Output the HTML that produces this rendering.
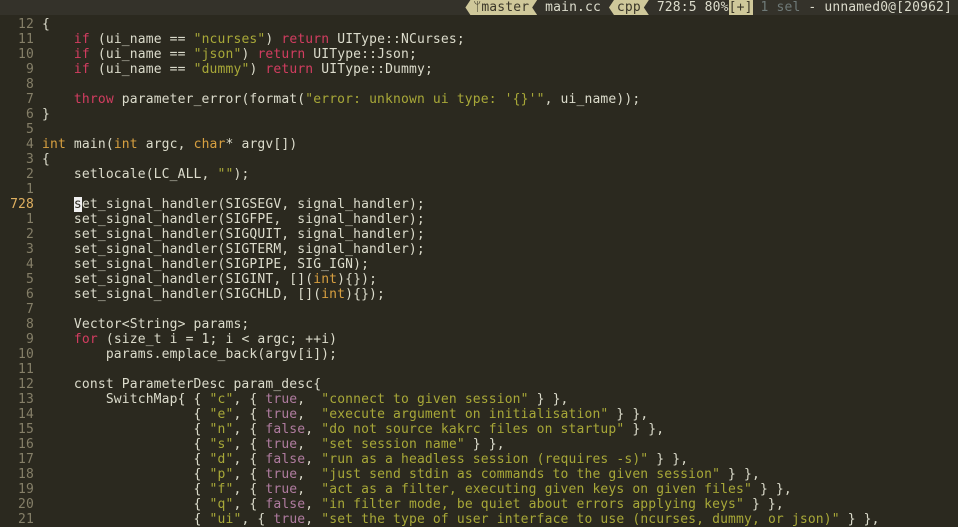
<!DOCTYPE html>
<html><head><meta charset="utf-8"><style>
html,body{margin:0;padding:0;background:#2b291f;width:958px;height:527px;overflow:hidden}
body{font-family:"DejaVu Sans Mono","Liberation Mono",monospace;font-size:13px;color:#dcdccc;letter-spacing:0.15px}
.row{position:absolute;left:0;height:15px;line-height:15px;white-space:pre;width:958px;margin-top:2px}
.ln{position:absolute;right:924px;color:#857f68;text-align:right}
.cur{color:#e0b060}
.c{position:absolute;left:42px}
.k{color:#d23d60}.s{color:#a8a838}.t{color:#d8a040}.b{color:#b07ca0}
#st{position:absolute;top:0;left:0;width:958px;height:15px;background:#34322a}
#st .in{position:absolute;right:6px;top:0;line-height:15px;white-space:pre;color:#dcdccc}
.pill{background:#cfc89a;color:#3a3628;clip-path:polygon(5px 0,100% 0,calc(100% - 5px) 50%,100% 100%,5px 100%,0 50%)}
.plus{background:#cfc89a;color:#3a3628}
.dim{color:#6f7a78}
.cursor{background:#f0f0f0;color:#2b291f}
</style></head><body>
<div id="st"><div class="in"><span class="pill"> ᛘmaster </span> main.cc <span class="pill"> cpp </span> 728:5 80%<span class="plus">[+]</span><span class="dim"> 1 sel</span> - unnamed0@[20962]</div></div>

<div class="row" style="top:15px"><span class="ln">12</span><span class="c">{</span></div>
<div class="row" style="top:30px"><span class="ln">11</span><span class="c">    <span class="k">if</span> (ui_name == <span class="s">"ncurses"</span>) <span class="k">return</span> UIType::NCurses;</span></div>
<div class="row" style="top:45px"><span class="ln">10</span><span class="c">    <span class="k">if</span> (ui_name == <span class="s">"json"</span>) <span class="k">return</span> UIType::Json;</span></div>
<div class="row" style="top:60px"><span class="ln">9</span><span class="c">    <span class="k">if</span> (ui_name == <span class="s">"dummy"</span>) <span class="k">return</span> UIType::Dummy;</span></div>
<div class="row" style="top:75px"><span class="ln">8</span></div>
<div class="row" style="top:90px"><span class="ln">7</span><span class="c">    <span class="k">throw</span> parameter_error(format(<span class="s">"error: unknown ui type: '{}'"</span>, ui_name));</span></div>
<div class="row" style="top:105px"><span class="ln">6</span><span class="c">}</span></div>
<div class="row" style="top:120px"><span class="ln">5</span></div>
<div class="row" style="top:135px"><span class="ln">4</span><span class="c"><span class="t">int</span> main(<span class="t">int</span> argc, <span class="t">char</span>* argv[])</span></div>
<div class="row" style="top:150px"><span class="ln">3</span><span class="c">{</span></div>
<div class="row" style="top:165px"><span class="ln">2</span><span class="c">    setlocale(LC_ALL, <span class="s">""</span>);</span></div>
<div class="row" style="top:180px"><span class="ln">1</span></div>
<div class="row" style="top:195px"><span class="ln cur">728</span><span class="c">    <span class="cursor">s</span>et_signal_handler(SIGSEGV, signal_handler);</span></div>
<div class="row" style="top:210px"><span class="ln">1</span><span class="c">    set_signal_handler(SIGFPE,  signal_handler);</span></div>
<div class="row" style="top:225px"><span class="ln">2</span><span class="c">    set_signal_handler(SIGQUIT, signal_handler);</span></div>
<div class="row" style="top:240px"><span class="ln">3</span><span class="c">    set_signal_handler(SIGTERM, signal_handler);</span></div>
<div class="row" style="top:255px"><span class="ln">4</span><span class="c">    set_signal_handler(SIGPIPE, SIG_IGN);</span></div>
<div class="row" style="top:270px"><span class="ln">5</span><span class="c">    set_signal_handler(SIGINT, [](<span class="t">int</span>){});</span></div>
<div class="row" style="top:285px"><span class="ln">6</span><span class="c">    set_signal_handler(SIGCHLD, [](<span class="t">int</span>){});</span></div>
<div class="row" style="top:300px"><span class="ln">7</span></div>
<div class="row" style="top:315px"><span class="ln">8</span><span class="c">    Vector&lt;String&gt; params;</span></div>
<div class="row" style="top:330px"><span class="ln">9</span><span class="c">    <span class="k">for</span> (size_t i = 1; i &lt; argc; ++i)</span></div>
<div class="row" style="top:345px"><span class="ln">10</span><span class="c">        params.emplace_back(argv[i]);</span></div>
<div class="row" style="top:360px"><span class="ln">11</span></div>
<div class="row" style="top:375px"><span class="ln">12</span><span class="c">    const ParameterDesc param_desc{</span></div>
<div class="row" style="top:390px"><span class="ln">13</span><span class="c">        SwitchMap{ { <span class="s">"c"</span>, { <span class="b">true</span>,  <span class="s">"connect to given session"</span> } },</span></div>
<div class="row" style="top:405px"><span class="ln">14</span><span class="c">                   { <span class="s">"e"</span>, { <span class="b">true</span>,  <span class="s">"execute argument on initialisation"</span> } },</span></div>
<div class="row" style="top:420px"><span class="ln">15</span><span class="c">                   { <span class="s">"n"</span>, { <span class="b">false</span>, <span class="s">"do not source kakrc files on startup"</span> } },</span></div>
<div class="row" style="top:435px"><span class="ln">16</span><span class="c">                   { <span class="s">"s"</span>, { <span class="b">true</span>,  <span class="s">"set session name"</span> } },</span></div>
<div class="row" style="top:450px"><span class="ln">17</span><span class="c">                   { <span class="s">"d"</span>, { <span class="b">false</span>, <span class="s">"run as a headless session (requires -s)"</span> } },</span></div>
<div class="row" style="top:465px"><span class="ln">18</span><span class="c">                   { <span class="s">"p"</span>, { <span class="b">true</span>,  <span class="s">"just send stdin as commands to the given session"</span> } },</span></div>
<div class="row" style="top:480px"><span class="ln">19</span><span class="c">                   { <span class="s">"f"</span>, { <span class="b">true</span>,  <span class="s">"act as a filter, executing given keys on given files"</span> } },</span></div>
<div class="row" style="top:495px"><span class="ln">20</span><span class="c">                   { <span class="s">"q"</span>, { <span class="b">false</span>, <span class="s">"in filter mode, be quiet about errors applying keys"</span> } },</span></div>
<div class="row" style="top:510px"><span class="ln">21</span><span class="c">                   { <span class="s">"ui"</span>, { <span class="b">true</span>, <span class="s">"set the type of user interface to use (ncurses, dummy, or json)"</span> } },</span></div>
</body></html>
